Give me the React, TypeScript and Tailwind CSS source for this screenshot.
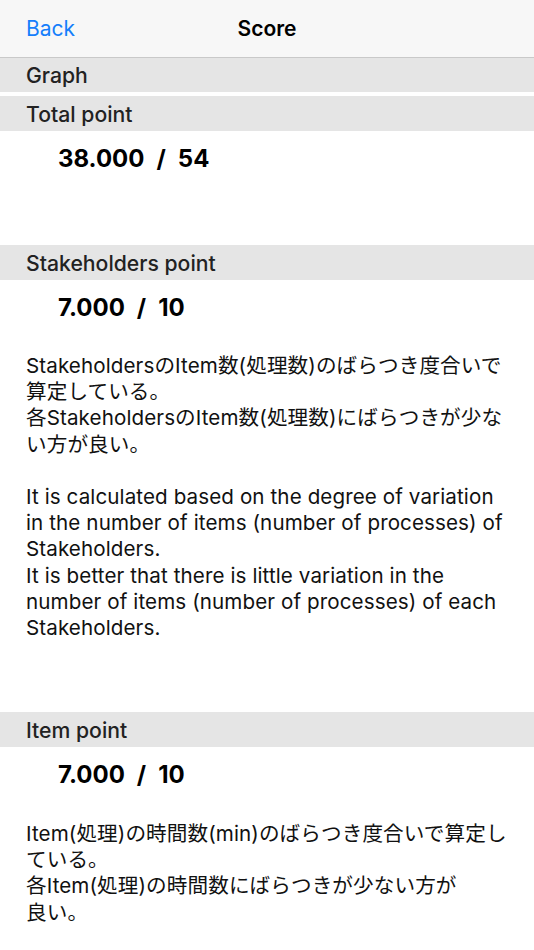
import React from "react";

const font = { fontFamily: '"Inter", "Noto Sans CJK JP", sans-serif' };

function Header({ title }: { title: string }) {
  return (
    <div className="h-[35px] bg-[#e5e5e5] flex items-center pl-[26px] pt-[2px] text-[21.2px] font-medium text-[#222222]">
      {title}
    </div>
  );
}

function Score({ value, max }: { value: string; max: string }) {
  return (
    <div className="pt-[13px] pl-[58px] h-[42px] flex items-center text-[24px] font-bold text-black leading-[30px]">
      <span>{value}</span>
      <span className="ml-[12px] mr-[12px]">/</span>
      <span>{max}</span>
    </div>
  );
}

function Para({ lines }: { lines: string[] }) {
  return (
    <div className="pl-[26px] text-[20.6px] leading-[26.2px] text-[#111111] whitespace-nowrap tracking-[0.1px]">
      {lines.map((l, i) => (
        <div key={i} className="h-[26.2px]">
          {l}
        </div>
      ))}
    </div>
  );
}

export default function App() {
  return (
    <div className="w-[534px] h-[950px] overflow-hidden bg-white" style={font}>
      <div className="h-[58px] bg-[#f7f7f7] border-b border-[#c9c9c9] relative flex items-center pt-[1px]">
        <span className="pl-[26px] text-[21px] text-[#157efb]">Back</span>
        <span className="absolute left-0 right-0 text-center text-[21px] font-semibold text-black pointer-events-none">
          Score
        </span>
      </div>
      <div className="h-[34px] bg-[#e5e5e5] flex items-center pl-[26px] pt-[2px] text-[21.2px] font-medium text-[#222222]">
        Graph
      </div>
      <div className="h-[4px] bg-white" />
      <Header title="Total point" />
      <div className="h-[114px]">
        <Score value="38.000" max="54" />
      </div>
      <Header title="Stakeholders point" />
      <Score value="7.000" max="10" />
      <div className="h-[31px]" />
      <Para
        lines={[
          "StakeholdersのItem数(処理数)のばらつき度合いで",
          "算定している。",
          "各StakeholdersのItem数(処理数)にばらつきが少な",
          "い方が良い。",
          "",
          "It is calculated based on the degree of variation",
          "in the number of items (number of processes) of",
          "Stakeholders.",
          "It is better that there is little variation in the",
          "number of items (number of processes) of each",
          "Stakeholders.",
        ]}
      />
      <div className="h-[71px]" />
      <Header title="Item point" />
      <Score value="7.000" max="10" />
      <div className="h-[32px]" />
      <Para
        lines={[
          "Item(処理)の時間数(min)のばらつき度合いで算定し",
          "ている。",
          "各Item(処理)の時間数にばらつきが少ない方が",
          "良い。",
        ]}
      />
    </div>
  );
}
